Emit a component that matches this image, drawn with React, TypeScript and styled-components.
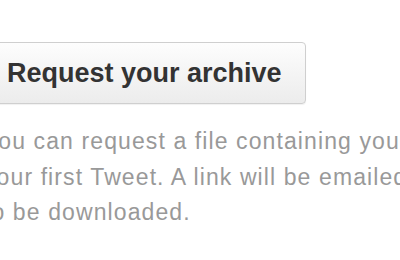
import React from "react";
import styled, { createGlobalStyle } from "styled-components";

const Global = createGlobalStyle`
  html, body { margin: 0; padding: 0; background: #ffffff; }
  body { width: 400px; height: 260px; overflow: hidden; }
`;

const Page = styled.div`
  width: 400px;
  height: 260px;
  overflow: hidden;
  background: #ffffff;
  font-family: "Liberation Sans", Arial, sans-serif;
`;

const Content = styled.div`
  margin-left: -16px;
  padding-top: 42px;
  display: flex;
  flex-direction: column;
  align-items: flex-start;
  gap: 20px;
`;

const ArchiveButton = styled.button`
  box-sizing: border-box;
  width: 322px;
  height: 62px;
  padding: 0 0 0 22px;
  text-align: left;
  border: 1px solid #cfcfcf;
  border-radius: 4px;
  background: linear-gradient(#fdfdfd, #ececec);
  box-shadow: 0 1px 1px rgba(0, 0, 0, 0.06);
  color: #333333;
  font-family: "Liberation Sans", Arial, sans-serif;
  font-weight: bold;
  font-size: 27px;
  cursor: pointer;
`;

const Description = styled.p`
  margin: 0;
  white-space: nowrap;
  color: #999999;
  font-size: 23px;
  letter-spacing: 1.1px;
  line-height: 35.5px;
`;

export default function App() {
  return (
    <Page>
      <Global />
      <Content>
        <ArchiveButton>Request your archive</ArchiveButton>
        <Description>
          You can request a file containing your information, starting with
          <br />
          your first Tweet. A link will be emailed to you when the file is ready
          <br />
          to be downloaded.
        </Description>
      </Content>
    </Page>
  );
}
